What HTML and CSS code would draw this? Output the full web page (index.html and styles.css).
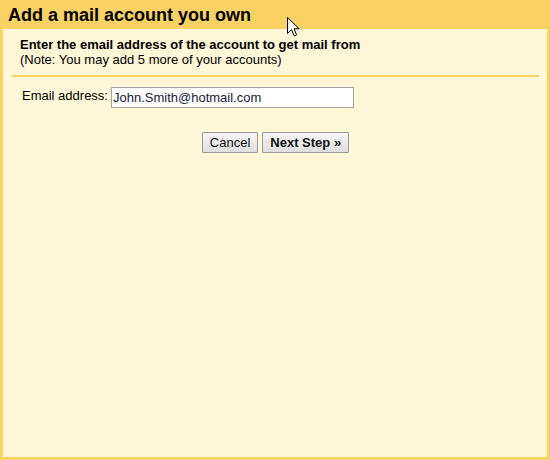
FILE: index.html
```html
<!DOCTYPE html>
<html lang="en">
<head>
  <meta charset="UTF-8">
  <title>Add a mail account you own</title>
  <link rel="stylesheet" href="styles.css">
</head>
<body>
  <div class="dialog">
    <div class="title">Add a mail account you own</div>
    <div class="panel">
      <div class="intro">
        <div class="lead">Enter the email address of the account to get mail from</div>
        <div class="note">(Note: You may add 5 more of your accounts)</div>
      </div>
      <div class="rule"></div>
      <div class="field">
        <label for="email">Email address:</label>
        <input id="email" type="text" value="John.Smith@hotmail.com">
      </div>
      <div class="actions">
        <button>Cancel</button>
        <button class="primary">Next Step &raquo;</button>
      </div>
    </div>
    <!-- mouse pointer -->
    <svg class="pointer" width="13" height="20" viewBox="0 0 13 20">
      <path d="M0.5 0.5 L0.5 16.5 L4.5 12.7 L7.2 18.8 L9.6 17.8 L7 11.8 L12.2 11.8 Z" fill="#fff" stroke="#000" stroke-width="1"/>
    </svg>
  </div>
</body>
</html>
```

FILE: styles.css
```css
body {
  margin: 0;
  background: #fad163;
  font-family: "Liberation Sans", Arial, sans-serif;
  color: #000;
}

.dialog {
  position: relative;
  height: 460px;
  display: flex;
  flex-direction: column;
}

.title {
  height: 29px;
  line-height: 30px;
  padding-left: 8px;
  font-size: 18px;
  font-weight: bold;
}

.panel {
  flex: 1;
  margin: 0 3px 3px;
  background: #fff7d7;
}

.intro {
  padding: 8px 0 0 17px;
  font-size: 13px;
  line-height: 15px;
}

.lead {
  font-weight: bold;
}

.rule {
  height: 2px;
  margin: 8px 8px 0 9px;
  background: #fad163;
}

.field {
  display: flex;
  align-items: flex-start;
  padding: 10px 0 0 19px;
  font-size: 13px;
}

.field label {
  padding-top: 1px;
  margin-right: 3px;
}

.field input {
  width: 239px;
  height: 19px;
  padding: 0 1px;
  margin: 0;
  border: 1px solid #a5a5a5;
  background: #fff;
  font-family: "Liberation Sans", Arial, sans-serif;
  font-size: 13px;
  color: #1a1a3a;
}

.actions {
  display: flex;
  justify-content: center;
  gap: 4px;
  padding: 24px 0 0 1px;
}

.actions button {
  height: 21px;
  padding: 0 7px;
  border: 1px solid #9a9a9a;
  border-radius: 1px;
  background: linear-gradient(#f6f6f6, #dedede);
  font-family: "Liberation Sans", Arial, sans-serif;
  font-size: 13px;
  color: #111;
}

.actions .primary {
  font-weight: bold;
  padding: 0 7px;
}

.pointer {
  position: absolute;
  left: 287px;
  top: 17px;
}
```
